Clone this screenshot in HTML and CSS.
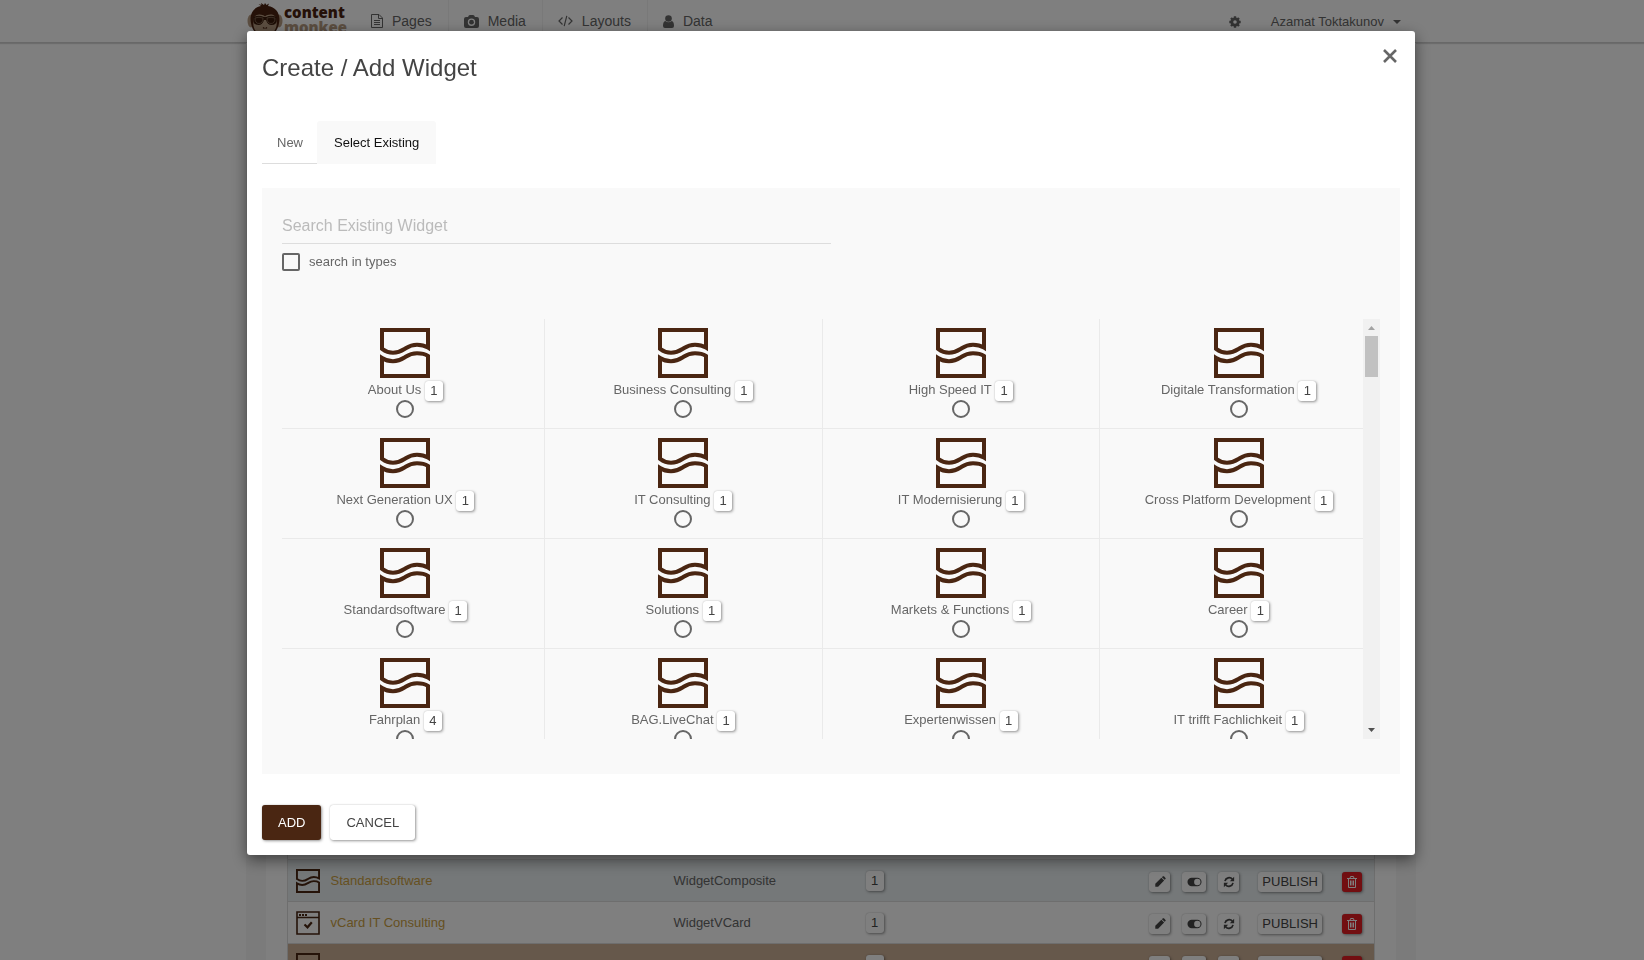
FILE: index.html
```html
<!DOCTYPE html>
<html lang="en">
<head>
<meta charset="utf-8">
<title>Content Monkee</title>
<link rel="stylesheet" href="styles.css">
</head>
<body>
<svg class="sprite" aria-hidden="true">
  <symbol id="i-composite" viewBox="0 0 50 50"><g fill="none" stroke="currentColor" stroke-width="4"><path d="M2 20.800V2H48V19.600C45 17.800 41 16.700 37 16.700C30 16.700 27 19.500 24.500 21C21 23.300 18 24.700 13 24.700C9 24.700 5 23 2 20.800z"/><path d="M2 30V48H48V28C45 26 41 25.300 37 25.300C30 25.300 27 28 24.500 29.500C21 31.800 18 33.200 13 33.200C9 33.200 5 32 2 30z"/></g></symbol>
  <symbol id="i-vcard" viewBox="0 0 24 24"><path d="M1 1h22v22H1z M1 6.500h22" fill="none" stroke="currentColor" stroke-width="1.600"/><path d="M3 3h2v2H3z M6 3h2v2H6z M9 3h2v2H9z" fill="currentColor"/><path d="M8.500 13.500l3 2.800 4.300-5" fill="none" stroke="currentColor" stroke-width="2.200"/></symbol>
  <symbol id="i-pencil" viewBox="0 0 14 14"><path d="M1.500 9L8.600 2l3.200 3.200L4.800 12.400H1.500z M9.300 1.400l1-1q.7-.5 1.300 0l1.800 1.800q.5.600 0 1.300l-1 1z" fill="currentColor"/></symbol>
  <symbol id="i-toggle" viewBox="0 0 16 10"><path fill-rule="evenodd" d="M5 .5h6a4.500 4.500 0 0 1 0 9H5a4.500 4.500 0 0 1 0-9z M11 1.600a3.400 3.400 0 0 0 0 6.800a3.400 3.400 0 0 0 0-6.800z" fill="currentColor"/></symbol>
  <symbol id="i-refresh" viewBox="0 0 14 14"><path d="M2.300 6A5 5 0 0 1 11 3.800M11.700 8A5 5 0 0 1 3 10.200" fill="none" stroke="currentColor" stroke-width="2"/><path d="M13 1V6H8z M1 13V8H6z" fill="currentColor"/></symbol>
  <symbol id="i-trash" viewBox="0 0 14 14"><path d="M2 3.500h10M5 3.200l.6-1.700h2.800L9 3.200M3.500 4v8.500h7V4M5.500 5.500v5M7 5.500v5M8.500 5.500v5" fill="none" stroke="currentColor" stroke-width="1"/></symbol>
</svg>

<header class="navbar">
  <div class="navbar-inner">
    <a class="brand" href="#" aria-label="content monkee">
      <svg class="brand-face" viewBox="0 0 36 36" aria-hidden="true">
        <g fill="#b79c82"><ellipse cx="4" cy="19" rx="3.500" ry="6.500"/><ellipse cx="32" cy="19" rx="3.500" ry="6.500"/></g>
        <path d="M11.500 2l3 1L14 1l3 2 1-2 1.500 2L22 1.500 21 4C29 5 34 12 32 21c-1 8-7 14-14 14S5 29 4 21C2 12 7 5 14 4z" fill="#4a2210"/>
        <path d="M18 14.500C22 11 30 12 29.500 19C31 27 25 34 18 34S5 27 6.500 19C6 12 14 11 18 14.500z" fill="#b79c82"/>
        <path d="M6.500 15q5-2.500 10.500 0h2q5.500-2.500 10.500 0 1.500 8-5 8-4 0-5.500-5h-2q-1.500 5-5.500 5-6.500 0-5-8z" fill="#3a1c0c"/>
        <path d="M8 16q4-1.500 8 0 0 5.500-4 5.500T8 16zM20 16q4-1.500 8 0 0 5.500-4 5.500T20 16z" fill="none" stroke="#8f745d" stroke-width=".7"/>
        <path d="M16 25.500l1.500 1M20 25.500l-1.500 1M11 30q7 3 14 0" fill="none" stroke="#4a2210" stroke-width="1.300"/>
      </svg>
      <span class="brand-name"><span class="brand-top">content</span><span class="brand-bottom">monkee</span></span>
    </a>
    <nav class="menu">
      <a href="#"><svg width="12" height="14" viewBox="0 0 12 14" aria-hidden="true"><path d="M.5.500h7.500l3.500 3.500v9.500H.5zM7.500.500V4.500h4M3 6.500h6M3 8.500h6M3 10.500h6" fill="none" stroke="currentColor"/></svg>Pages</a>
      <a href="#"><svg width="15" height="13" viewBox="0 0 15 13" aria-hidden="true"><path fill-rule="evenodd" d="M2 2h2l.8-1.400Q5.200 0 6 0h3q.8 0 1.200.6L11 2h2q2 0 2 2v7q0 2-2 2H2q-2 0-2-2V4q0-2 2-2zM7.500 3.500a3.700 3.700 0 1 0 0 7.400a3.700 3.700 0 0 0 0-7.400z" fill="currentColor"/><circle cx="7.500" cy="7.200" r="2.400" fill="currentColor"/></svg>Media</a>
      <a href="#"><svg width="15" height="12" viewBox="0 0 15 12" aria-hidden="true"><path d="M4.500 2.500L1 6l3.500 3.500M10.500 2.500L14 6l-3.500 3.500M8.800.8L6.200 11.200" fill="none" stroke="currentColor" stroke-width="1.200"/></svg>Layouts</a>
      <a href="#"><svg width="11" height="13" viewBox="0 0 11 13" aria-hidden="true"><circle cx="5.500" cy="3.500" r="3.300" fill="currentColor"/><path d="M2.300 6q3.200 2.500 6.400 0Q11 6.500 11 11q0 2-2 2H2q-2 0-2-2Q0 6.500 2.300 6z" fill="currentColor"/></svg>Data</a>
    </nav>
    <div class="account">
      <button type="button" class="plain" aria-label="Settings"><svg width="12" height="12" viewBox="0 0 12 12" aria-hidden="true"><circle cx="6" cy="6" r="3.200" fill="none" stroke="currentColor" stroke-width="2.800"/><path d="M6 .3v2M6 9.700v2M.3 6h2M9.700 6h2M2 2l1.400 1.400M8.600 8.600L10 10M10 2L8.600 3.400M3.400 8.600L2 10" stroke="currentColor" stroke-width="2.400"/></svg></button>
      <button type="button" class="plain">Azamat Toktakunov<span class="caret"></span></button>
    </div>
  </div>
</header>

<main class="page">
  <div class="sheet">
  <table class="widgets">
    <colgroup><col class="c-icon"><col class="c-name"><col class="c-type"><col class="c-count"><col></colgroup>
    <tbody>
      <tr><td colspan="5"></td></tr>
      <tr class="tint">
        <td><svg class="thumb"><use href="#i-composite"/></svg></td>
        <td><a href="#">Standardsoftware</a></td><td>WidgetComposite</td><td><span class="badge">1</span></td>
        <td><div class="actions"><button type="button" class="mini" aria-label="Edit"><svg width="12" height="12"><use href="#i-pencil"/></svg></button><button type="button" class="mini wide" aria-label="Toggle"><svg width="15" height="10"><use href="#i-toggle"/></svg></button><button type="button" class="mini" aria-label="Refresh"><svg width="12" height="12"><use href="#i-refresh"/></svg></button><button type="button" class="mini publish">PUBLISH</button><button type="button" class="mini danger" aria-label="Delete"><svg width="14" height="14"><use href="#i-trash"/></svg></button></div></td>
      </tr>
      <tr>
        <td><svg class="thumb"><use href="#i-vcard"/></svg></td>
        <td><a href="#">vCard IT Consulting</a></td><td>WidgetVCard</td><td><span class="badge">1</span></td>
        <td><div class="actions"><button type="button" class="mini" aria-label="Edit"><svg width="12" height="12"><use href="#i-pencil"/></svg></button><button type="button" class="mini wide" aria-label="Toggle"><svg width="15" height="10"><use href="#i-toggle"/></svg></button><button type="button" class="mini" aria-label="Refresh"><svg width="12" height="12"><use href="#i-refresh"/></svg></button><button type="button" class="mini publish">PUBLISH</button><button type="button" class="mini danger" aria-label="Delete"><svg width="14" height="14"><use href="#i-trash"/></svg></button></div></td>
      </tr>
      <tr class="brown">
        <td><svg class="thumb"><use href="#i-composite"/></svg></td>
        <td><a href="#">Solutions</a></td><td></td><td><span class="badge">1</span></td>
        <td><div class="actions"><button type="button" class="mini" aria-label="Edit"><svg width="12" height="12"><use href="#i-pencil"/></svg></button><button type="button" class="mini wide" aria-label="Toggle"><svg width="15" height="10"><use href="#i-toggle"/></svg></button><button type="button" class="mini" aria-label="Refresh"><svg width="12" height="12"><use href="#i-refresh"/></svg></button><button type="button" class="mini publish">PUBLISH</button><button type="button" class="mini danger" aria-label="Delete"><svg width="14" height="14"><use href="#i-trash"/></svg></button></div></td>
      </tr>
    </tbody>
  </table>
  </div>
</main>

<div class="backdrop">
  <section class="modal" role="dialog" aria-labelledby="dialog-title">
    <div class="modal-head">
      <h1 id="dialog-title">Create / Add Widget</h1>
      <button type="button" class="close" aria-label="Close"><svg width="14" height="14" viewBox="0 0 14 14"><path d="M1 1l12 12M13 1L1 13" stroke="currentColor" stroke-width="2.600"/></svg></button>
    </div>
    <div class="tabs" role="tablist">
      <button type="button" role="tab" class="tab">New</button>
      <button type="button" role="tab" class="tab active" aria-selected="true">Select Existing</button>
    </div>
    <div class="panel">
      <input class="search" type="text" placeholder="Search Existing Widget" aria-label="Search Existing Widget">
      <label class="types"><input type="checkbox">search in types</label>
      <div class="scroller">
        <div class="view">
          <div class="grid">
            <label class="cell"><svg class="pic"><use href="#i-composite"/></svg><span class="name">About Us <span class="badge">1</span></span><input type="radio" name="w"></label>
            <label class="cell"><svg class="pic"><use href="#i-composite"/></svg><span class="name">Business Consulting <span class="badge">1</span></span><input type="radio" name="w"></label>
            <label class="cell"><svg class="pic"><use href="#i-composite"/></svg><span class="name">High Speed IT <span class="badge">1</span></span><input type="radio" name="w"></label>
            <label class="cell"><svg class="pic"><use href="#i-composite"/></svg><span class="name">Digitale Transformation <span class="badge">1</span></span><input type="radio" name="w"></label>
            <label class="cell"><svg class="pic"><use href="#i-composite"/></svg><span class="name">Next Generation UX <span class="badge">1</span></span><input type="radio" name="w"></label>
            <label class="cell"><svg class="pic"><use href="#i-composite"/></svg><span class="name">IT Consulting <span class="badge">1</span></span><input type="radio" name="w"></label>
            <label class="cell"><svg class="pic"><use href="#i-composite"/></svg><span class="name">IT Modernisierung <span class="badge">1</span></span><input type="radio" name="w"></label>
            <label class="cell"><svg class="pic"><use href="#i-composite"/></svg><span class="name">Cross Platform Development <span class="badge">1</span></span><input type="radio" name="w"></label>
            <label class="cell"><svg class="pic"><use href="#i-composite"/></svg><span class="name">Standardsoftware <span class="badge">1</span></span><input type="radio" name="w"></label>
            <label class="cell"><svg class="pic"><use href="#i-composite"/></svg><span class="name">Solutions <span class="badge">1</span></span><input type="radio" name="w"></label>
            <label class="cell"><svg class="pic"><use href="#i-composite"/></svg><span class="name">Markets &amp; Functions <span class="badge">1</span></span><input type="radio" name="w"></label>
            <label class="cell"><svg class="pic"><use href="#i-composite"/></svg><span class="name">Career <span class="badge">1</span></span><input type="radio" name="w"></label>
            <label class="cell"><svg class="pic"><use href="#i-composite"/></svg><span class="name">Fahrplan <span class="badge">4</span></span><input type="radio" name="w"></label>
            <label class="cell"><svg class="pic"><use href="#i-composite"/></svg><span class="name">BAG.LiveChat <span class="badge">1</span></span><input type="radio" name="w"></label>
            <label class="cell"><svg class="pic"><use href="#i-composite"/></svg><span class="name">Expertenwissen <span class="badge">1</span></span><input type="radio" name="w"></label>
            <label class="cell"><svg class="pic"><use href="#i-composite"/></svg><span class="name">IT trifft Fachlichkeit <span class="badge">1</span></span><input type="radio" name="w"></label>
          </div>
        </div>
        <div class="bar" aria-hidden="true">
          <svg width="17" height="17" viewBox="0 0 17 17"><path d="M5 11h7L8.500 7z" fill="#a3a3a3"/></svg>
          <div class="bar-thumb"></div>
          <svg class="bar-down" width="17" height="17" viewBox="0 0 17 17"><path d="M5 6h7L8.500 10z" fill="#505050"/></svg>
        </div>
      </div>
    </div>
    <div class="buttons">
      <button type="button" class="btn primary">ADD</button>
      <button type="button" class="btn">CANCEL</button>
    </div>
  </section>
</div>
</body>
</html>
```

FILE: styles.css
```css
* { box-sizing: border-box; }

html, body { height: 100%; }

body {
  margin: 0;
  overflow: hidden;
  background: #fff;
  color: #666;
  font: 13px/20px "Liberation Sans", Arial, sans-serif;
}

button, input { font: inherit; color: inherit; margin: 0; }
button { cursor: pointer; }
svg { display: block; flex: none; }
.sprite { position: absolute; width: 0; height: 0; }

/* navigation bar */
.navbar {
  height: 43px;
  padding-left: 18px;
  border-bottom: 1px solid #d0d0d0;
  box-shadow: 0 1px 1px rgba(0, 0, 0, .15);
}

.navbar-inner {
  display: flex;
  align-items: center;
  max-width: 1170px;
  height: 42px;
  margin: 0 auto;
  padding-right: 15px;
}

.brand {
  display: flex;
  align-self: flex-start;
  gap: 1px;
  width: 110px;
  padding: 2px 0 0 1px;
  text-decoration: none;
}
.brand-face { width: 36px; height: 36px; }
.brand-name {
  display: flex;
  flex-direction: column;
  padding-top: 3px;
  font: 800 15px/15px "Open Sans", sans-serif;
}
.brand-top { color: #4a2210; }
.brand-bottom { color: #b79c82; }

.menu { display: flex; }
.menu a {
  display: flex;
  align-items: center;
  gap: 9px;
  height: 42px;
  padding: 0 16px 0 15px;
  border-right: 1px solid #f2f2f2;
  color: #666;
  font-size: 14px;
  text-decoration: none;
}
.menu a:last-child { border-right: 0; }

.account { display: flex; gap: 30px; margin-left: auto; }
.plain {
  display: flex;
  align-items: center;
  gap: 9px;
  padding: 1px 0 0;
  border: 0;
  background: none;
}
.caret {
  border: 4px solid transparent;
  border-top-color: #666;
  border-bottom: 0;
}

/* widget list */
.page { padding-left: 18px; }
.sheet {
  max-width: 1170px;
  margin: 0 auto;
  padding: 774px 21px 0;
  border: solid #f7f7f7;
  border-width: 0 20px;
}
.widgets {
  width: 100%;
  border-collapse: collapse;
  table-layout: fixed;
  border: 1px solid #ddd;
  background: #fff;
}
.widgets td {
  height: 42px;
  padding: 0;
  border-top: 1px solid #ddd;
  vertical-align: middle;
}
.widgets td:first-child { padding-left: 8px; }
.widgets a { color: #cca143; text-decoration: none; }
.widgets .tint { background: #eaf0f2; }
.widgets .brown { background: #ccb097; }
.c-icon { width: 43px; }
.c-name { width: 343px; }
.c-type { width: 192px; }
.c-count { width: 60px; }
.thumb { width: 24px; height: 24px; color: #4a2612; }

.actions {
  display: flex;
  align-items: center;
  justify-content: flex-end;
  gap: 12px;
  padding: 2px 12px 0 0;
}
.mini {
  display: flex;
  align-items: center;
  justify-content: center;
  width: 21px;
  height: 20px;
  padding: 0;
  border: 0;
  border-radius: 3px;
  background: #fff;
  box-shadow: 0 0 1px rgba(0, 0, 0, .25), 1px 1px 3px rgba(0, 0, 0, .4);
  color: #444;
}
.wide { width: 24px; }
.publish { width: auto; margin: 0 8px 0 7px; padding: 0 4px; }
.danger { width: 20px; background: #e51c23; color: #fff; }

.badge {
  display: inline-block;
  min-width: 18px;
  height: 20px;
  padding: 0 5px;
  border-radius: 3px;
  background: #fff;
  box-shadow: 0 0 1px rgba(0, 0, 0, .25), 1px 1px 3px rgba(0, 0, 0, .4);
  color: #444;
  line-height: 20px;
  text-align: center;
  vertical-align: -1px;
}

/* dialog */
.backdrop {
  position: fixed;
  inset: 0;
  padding: 31px 0 0 18px;
  background: rgba(0, 0, 0, .5);
}
.modal {
  max-width: 1168px;
  margin: 0 auto;
  padding: 15px;
  border-radius: 3px;
  background: #fff;
  box-shadow: 0 5px 15px rgba(0, 0, 0, .5);
}
.modal-head {
  display: flex;
  justify-content: space-between;
  align-items: flex-start;
  margin-bottom: 35px;
}
.modal-head h1 {
  margin: 0;
  padding: 7px 0 3px;
  color: #444;
  font-size: 24px;
  font-weight: 400;
  line-height: 30px;
}
.close {
  padding: 3px;
  border: 0;
  background: none;
}

.tabs { display: flex; margin-bottom: 24px; }
.tab {
  height: 43px;
  padding: 2px 14px 0 15px;
  border: 0;
  border-bottom: 1px solid #ddd;
  background: none;
}
.tab.active {
  padding: 2px 17px 0;
  border-color: #f9f9f9;
  border-radius: 3px 3px 0 0;
  background: #f9f9f9;
  color: #111;
}

.panel {
  display: flex;
  flex-direction: column;
  padding: 19px 20px 35px;
  background: #f9f9f9;
}
.search {
  width: 50%;
  height: 37px;
  padding: 2px 0 0;
  border: 0;
  border-bottom: 1px solid #ddd;
  background: none;
  font-size: 16px;
  outline: 0;
}
.search::placeholder { color: #bbb; opacity: 1; }
.types {
  display: flex;
  align-items: center;
  gap: 9px;
  align-self: flex-start;
  height: 20px;
  margin: 8px 0 47px;
}
.types input, .cell input {
  appearance: none;
  width: 18px;
  height: 18px;
  border: 2px solid #666;
  border-radius: 2px;
}

.scroller { display: flex; height: 420px; }
.view { flex: 1; min-width: 0; overflow: hidden; }
.grid {
  display: grid;
  grid-template-columns: repeat(4, 1fr);
  margin: 0 -15px;
}
.cell {
  display: flex;
  flex-direction: column;
  align-items: center;
  height: 110px;
  padding-top: 9px;
  border-right: 1px solid #eaeaea;
  border-bottom: 1px solid #eaeaea;
}
.cell input { border-radius: 50%; }
.pic { width: 50px; height: 50px; color: #4a2612; }
.name {
  height: 22px;
  line-height: 24px;
  white-space: nowrap;
}

.bar {
  display: flex;
  flex-direction: column;
  align-items: center;
  width: 17px;
  background: #f1f1f1;
}
.bar-thumb { width: 13px; height: 41px; background: #c1c1c1; }
.bar-down { margin-top: auto; }

.buttons { display: flex; gap: 9px; margin-top: 31px; }
.btn {
  height: 35px;
  padding: 0 16px;
  border: 0;
  border-radius: 3px;
  background: #fff;
  box-shadow: 0 0 1px rgba(0, 0, 0, .25), 1px 1px 3px rgba(0, 0, 0, .4);
  color: #444;
}
.primary { background: #4a2612; color: #fff; }
```
